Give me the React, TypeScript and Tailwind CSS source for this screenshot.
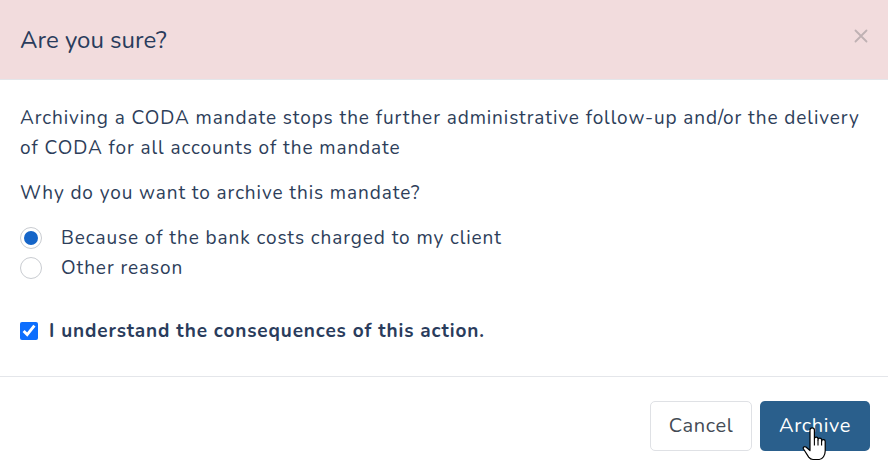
import { useState } from "react";

const FONT = { fontFamily: "Nunito, 'Noto Sans', 'Open Sans', sans-serif" };

function Radio({ checked, label, onClick }: { checked: boolean; label: string; onClick: () => void }) {
  return (
    <label className="flex items-center h-[30px] cursor-pointer" onClick={onClick}>
      <span className="w-[22px] h-[22px] rounded-full border border-[#c9ccd1] bg-white flex items-center justify-center shrink-0">
        {checked && <span className="w-[14px] h-[14px] rounded-full bg-[#1565c8]" />}
      </span>
      <span className="ml-[19px] text-[19px] tracking-[0.048em] text-[#2d3e5a]">{label}</span>
    </label>
  );
}

// pointer cursor sitting on the Archive button in the screenshot
function HandCursor() {
  return (
    <svg width="24" height="35" viewBox="0 0 24 35" className="absolute left-[42px] top-[26px] pointer-events-none">
      <path
        d="M8 3a2.2 2.2 0 0 1 4.4 0V12a1.8 1.8 0 0 1 3.6 0V13a1.8 1.8 0 0 1 3.6 0v1.5a1.8 1.8 0 0 1 3.6 0V24c0 4-2.5 8.5-6 8.5H11c-2 0-3.3-1-4.3-2.4L1.5 22c-1-1.5 1-3.2 2.4-2L8 23.5Z"
        fill="#fff"
        stroke="#000"
        strokeWidth="1.2"
        strokeLinejoin="round"
      />
      <path d="M12.4 12v6.5M16 13v5.5M19.6 14.5v4" stroke="#000" strokeWidth="1.1" />
    </svg>
  );
}

export default function App() {
  const [reason, setReason] = useState<"bank" | "other">("bank");
  const [ack, setAck] = useState(true);

  return (
    <div className="w-[888px] h-[472px] bg-white overflow-hidden text-[#2d3e5a]" style={FONT}>
      {/* Header */}
      <div className="h-[80px] bg-[#f2dcdd] border-b border-[#e4e6ea] flex items-center justify-between pl-5 pr-[20px]">
        <h1 className="text-[24px] leading-none text-[#2a3c5c]">Are you sure?</h1>
        <button className="w-[14px] h-[14px] mb-[8px] flex items-center justify-center">
          <svg width="14" height="14" viewBox="0 0 14 14">
            <path d="M1.5 1.5l11 11M12.5 1.5l-11 11" stroke="#bfb1b3" strokeWidth="1.8" strokeLinecap="round" />
          </svg>
        </button>
      </div>

      {/* Body */}
      <div className="px-5 pt-[23px] pb-[30px] border-b border-[#e4e6ea]">
        <p className="text-[19px] leading-[30px] tracking-[0.048em]">
          Archiving a CODA mandate stops the further administrative follow-up and/or the delivery of CODA for all accounts of the mandate
        </p>
        <p className="text-[19px] leading-[30px] tracking-[0.048em] mt-[15px]">Why do you want to archive this mandate?</p>
        <div className="mt-[15px] flex flex-col">
          <Radio checked={reason === "bank"} label="Because of the bank costs charged to my client" onClick={() => setReason("bank")} />
          <Radio checked={reason === "other"} label="Other reason" onClick={() => setReason("other")} />
        </div>
        <label className="mt-[33px] flex items-center h-[30px] cursor-pointer">
          <input
            type="checkbox"
            checked={ack}
            onChange={(e) => setAck(e.target.checked)}
            className="w-[18px] h-[18px] accent-[#0d6efd] m-0 shrink-0"
          />
          <span className="ml-[11px] text-[19px] tracking-[0.045em] font-bold text-[#2a3c5c]">
            I understand the consequences of this action.
          </span>
        </label>
      </div>

      {/* Footer */}
      <div className="flex justify-end gap-2 pt-[24px] pr-[18px]">
        <button className="h-[50px] w-[102px] rounded-[5px] border border-[#dfe1e5] bg-white text-[20px] tracking-[0.03em] text-[#444b55]">
          Cancel
        </button>
        <button className="relative h-[50px] w-[110px] rounded-[5px] bg-[#2a5f8c] text-[20px] tracking-[0.03em] text-white">
          Archive
          <HandCursor />
        </button>
      </div>
    </div>
  );
}
